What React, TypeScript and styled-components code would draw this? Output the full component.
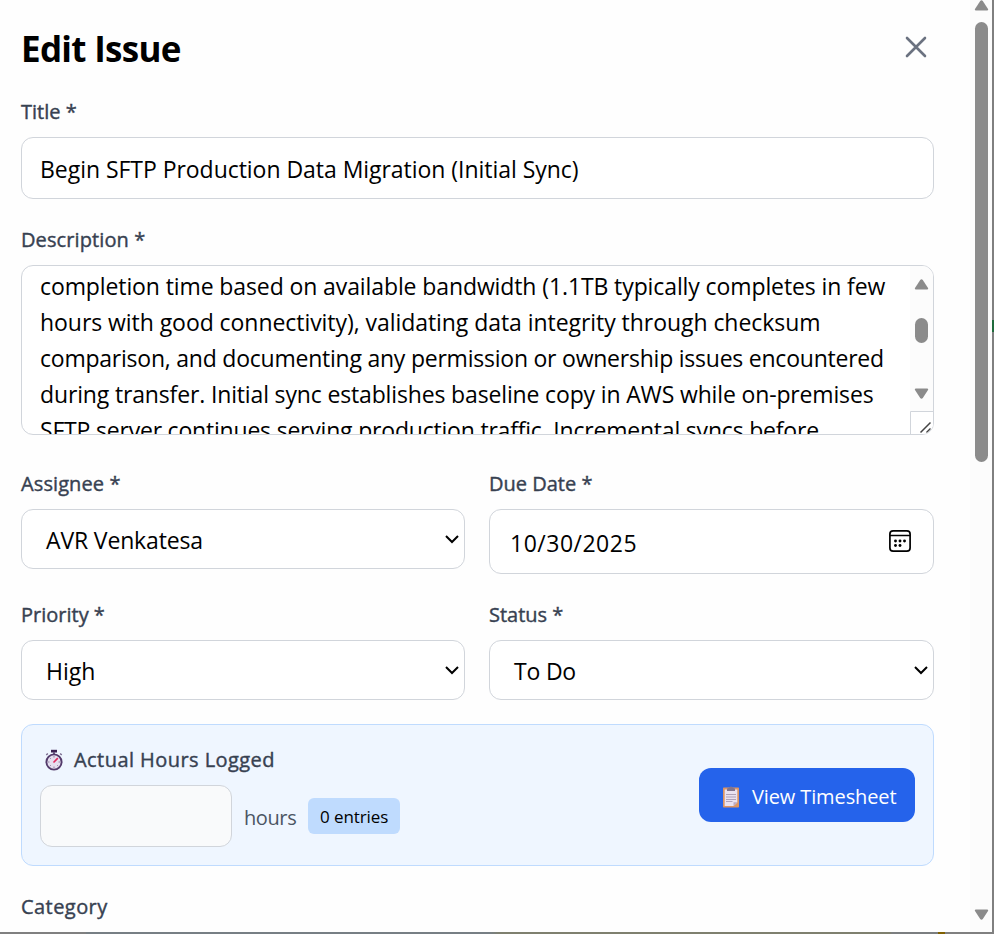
import React from "react";
import styled, { createGlobalStyle } from "styled-components";

const Global = createGlobalStyle`
  *{box-sizing:border-box}
  body{margin:0;background:#fff;overflow:hidden;font-family:"Open Sans","Noto Sans",sans-serif}
`;

const Frame = styled.div`
  width:994px;height:934px;display:flex;padding:0 2px 2px 0;overflow:hidden;
  background:
    linear-gradient(#1f6b3c,#1f6b3c) 992px 320px / 2px 12px no-repeat,
    linear-gradient(90deg,#808080 86px,#777f84 86px,#777f84 490px,#7f806f 500px,#7f806f 890px,#7b7e80 892px,#7b7e80 938px,#806000 938px,#806000 945px,#808080 945px) 0 932px / 992px 2px no-repeat,
    #808080;
`;
const Modal = styled.main`
  width:970px;height:932px;background:#fefefe;padding:24px 36px 0 21px;overflow:hidden;
`;
const PageScroll = styled.div`
  width:22px;height:932px;background:#fcfcfc;display:flex;flex-direction:column;align-items:center;
  padding:0 0 12px 1px;
`;
const Arrow = styled.svg`width:15px;height:11px;display:block;flex:none;`;
const Thumb = styled.div<{ $h: number; $top: number }>`
  width:13px;height:${p => p.$h}px;margin-top:${p => p.$top}px;background:#8b8b8b;border-radius:7px;flex:none;
`;
const Grow = styled.div`flex:1;`;
const Text = styled.span<{ $ls?: number }>`
  white-space:pre;letter-spacing:${p => p.$ls ?? 0}px;
`;
const Header = styled.header`
  display:flex;justify-content:space-between;height:76px;padding-right:4px;
`;
const Heading = styled.h1`margin:0;font-size:35px;font-weight:700;line-height:50px;color:#000;`;
const Close = styled.svg`width:28px;height:28px;margin-top:9px;`;
const Label = styled.div`
  height:37px;font-size:20px;line-height:24px;font-weight:500;color:#374151;white-space:nowrap;
  -webkit-text-stroke:0.4px #374151;
`;
const Box = styled.div<{ $h: number; $pl: number; $mb: number; $pr?: number }>`
  height:${p => p.$h}px;border:1px solid #d1d5db;border-radius:12px;background:#fff;
  padding:2px ${p => p.$pr ?? p.$pl}px 0 ${p => p.$pl}px;margin-bottom:${p => p.$mb}px;
  display:flex;align-items:center;justify-content:space-between;font-size:23px;color:#000;
`;
const Area = styled.div`
  height:170px;border:1px solid #d1d5db;border-radius:12px;margin-bottom:37px;overflow:hidden;display:flex;background:#fff;
`;
const AreaText = styled.div`
  flex:1;padding-left:18px;margin-top:2px;font-size:23px;line-height:36px;color:#000;
  display:flex;flex-direction:column;
`;
const AreaSide = styled.div`width:23px;display:flex;flex-direction:column;align-items:center;background:#fcfcfc;padding-top:13px;`;
const Corner = styled.svg`width:23px;height:23px;display:block;margin-top:12px;flex:none;`;
const Grid = styled.div`display:grid;grid-template-columns:444px 445px;column-gap:24px;`;
const Field = styled.div<{ $h: number }>`height:${p => p.$h}px;`;
const Chevron = styled.svg`width:16px;height:12px;margin-top:-3px;flex:none;`;
const CalIcon = styled.svg`width:24px;height:24px;margin-top:-4px;flex:none;`;
const Hours = styled.section`
  height:142px;border:1px solid #bfdbfe;border-radius:12px;background:#eff6ff;
  display:flex;justify-content:space-between;align-items:center;padding:0 18px;margin-bottom:29px;
`;
const HoursLeft = styled.div`height:100%;padding-top:22px;`;
const HoursTitle = styled.div`
  display:flex;align-items:center;height:26px;font-size:20px;line-height:26px;font-weight:500;color:#374151;
  -webkit-text-stroke:0.4px #374151;
  margin-bottom:12px;padding-left:4px;gap:10px;
`;
const Emoji = styled.svg`width:20px;height:22px;flex:none;-webkit-text-stroke:0;`;
const HoursRow = styled.div`display:flex;align-items:center;`;
const HoursInput = styled.div`width:192px;height:62px;border:1px solid #d1d5db;border-radius:12px;background:#f9fafb;`;
const Unit = styled.div`width:64px;margin:3px 0 0 12px;font-size:20px;color:#4b5563;`;
const Badge = styled.div`
  width:92px;height:36px;border-radius:6px;background:#bfdbfe;font-size:17px;line-height:37px;padding-left:12px;color:#000;
`;
const Button = styled.button`
  width:216px;height:54px;border:0;border-radius:12px;background:#2563eb;color:#fff;font:400 20px/54px "Open Sans",sans-serif;
  display:flex;align-items:center;padding:3px 0 0 22px;gap:11px;
`;

const ArrowUp = () => <Arrow viewBox="0 0 15 11"><path d="M6.200 1 1 9q-.7 1.500 1 1.500h11q1.700 0 1-1.500L8.800 1Q7.500 -.5 6.200 1z" fill="#8b8b8b" /></Arrow>;
const ArrowDown = () => <Arrow viewBox="0 0 15 11"><path d="M6.200 10 1 2Q.3.500 2 .5h11q1.700 0 1 1.500L8.800 10q-1.300 1.500-2.600 0z" fill="#8b8b8b" /></Arrow>;
const Down = () => <Chevron viewBox="0 0 16 12"><path d="m2 3 6 6 6-6" fill="none" stroke="#000" strokeWidth="2" /></Chevron>;

const Calendar = () => (
  <CalIcon viewBox="0 0 24 24">
    <rect x="1.9" y="1.900" width="20.200" height="20.200" rx="3.200" fill="none" stroke="#000" strokeWidth="1.700" />
    <path d="M2 6.500h20" stroke="#000" strokeWidth="1.500" />
    <g fill="#000">
      <circle cx="7.500" cy="12" r="1.450" /><circle cx="12" cy="12" r="1.450" /><circle cx="16.500" cy="12" r="1.450" />
      <circle cx="7.500" cy="16.500" r="1.450" /><circle cx="12" cy="16.500" r="1.450" />
    </g>
  </CalIcon>
);

const Stopwatch = () => (
  <Emoji viewBox="0 0 20 22">
    <path d="M7 .8h6v2.700H7z" fill="#3b2353" />
    <path d="M9 3h2v3H9z" fill="#6b5b83" />
    <path d="m2.300 6 1.500-1.500M17.700 6l-1.500-1.500" stroke="#7b6c90" strokeWidth="1.500" />
    <circle cx="10" cy="13" r="7.600" fill="#e6dff0" stroke="#533b6b" strokeWidth="1.900" />
    <path d="M10 7v1.500M10 17.500V19M4 13h1.500M14.500 13H16M5.800 8.800l1 1M5.800 17.200l1-1M14.200 17.200l-1-1" stroke="#8f83a2" strokeWidth="1" />
    <path d="m9.500 13.500 4.300-4.300" stroke="#e22b5f" strokeWidth="1.700" />
  </Emoji>
);

const Clipboard = () => (
  <Emoji viewBox="0 0 20 22">
    <rect x="2" y="1.500" width="16" height="20" rx=".7" fill="#dc9564" />
    <path d="M3.700 3.500h12.600v13L12.500 20H3.700z" fill="#eae2f0" />
    <path d="M12.500 20v-3.700h3.800z" fill="#b9a9c4" />
    <path d="M6 5V3q0-1 2-1 .4-1.500 2-1.500T12 2q2 0 2 1v2z" fill="#82758d" />
    <path d="M5 8.500h10M5 11h10M5 13.500h10M5 15.500h6.500" stroke="#afa2b9" strokeWidth="1" />
  </Emoji>
);

const lines: [string, number][] = [
  ["completion time based on available bandwidth (1.1TB typically completes in few", -0.105],
  ["hours with good connectivity), validating data integrity through checksum", -0.055],
  ["comparison, and documenting any permission or ownership issues encountered", -0.23],
  ["during transfer. Initial sync establishes baseline copy in AWS while on-premises", -0.15],
  ["SFTP server continues serving production traffic. Incremental syncs before", -0.2],
];

export default function App() {
  return (
    <>
      <Global />
      <Frame>
        <Modal>
          <Header>
            <Heading><Text $ls={-0.7}>Edit Issue</Text></Heading>
            <Close viewBox="0 0 28 28"><path d="m5 5 18 18M23 5 5 23" stroke="#6b7280" strokeWidth="2.600" strokeLinecap="round" /></Close>
          </Header>
          <Label><Text>Title *</Text></Label>
          <Box $h={62} $pl={18} $mb={29}><Text $ls={-0.04}>Begin SFTP Production Data Migration (Initial Sync)</Text></Box>
          <Label><Text $ls={0.1}>Description *</Text></Label>
          <Area>
            <AreaText>{lines.map(([t, ls]) => <Text key={t} $ls={ls}>{t}</Text>)}</AreaText>
            <AreaSide>
              <ArrowUp /><Thumb $h={25} $top={28} /><Grow /><ArrowDown />
              <Corner viewBox="0 0 23 23"><path d="M0 0h23v23H0z" fill="#fff" /><path d="M.5 23V.5H23" fill="none" stroke="#d1d5db" /><path d="M10.500 21.500 20.500 11.500M16.500 21.500l4-4" stroke="#444" strokeWidth="1.500" /></Corner>
            </AreaSide>
          </Area>
          <Grid>
            <Field $h={131}><Label><Text $ls={0.1}>Assignee *</Text></Label><Box $h={60} $pl={24} $pr={4} $mb={0}><Text $ls={-0.15}>AVR Venkatesa</Text><Down /></Box></Field>
            <Field $h={131}><Label><Text>Due Date *</Text></Label><Box $h={65} $pl={20} $pr={21} $mb={0}><Text $ls={0.5}>10/30/2025</Text><Calendar /></Box></Field>
            <Field $h={121}><Label><Text>Priority *</Text></Label><Box $h={60} $pl={24} $pr={4} $mb={0}><Text>High</Text><Down /></Box></Field>
            <Field $h={121}><Label><Text>Status *</Text></Label><Box $h={60} $pl={24} $pr={4} $mb={0}><Text $ls={-0.2}>To Do</Text><Down /></Box></Field>
          </Grid>
          <Hours>
            <HoursLeft>
              <HoursTitle><Stopwatch /><Text $ls={0.44}>Actual Hours Logged</Text></HoursTitle>
              <HoursRow><HoursInput /><Unit><Text $ls={-0.4}>hours</Text></Unit><Badge><Text $ls={-0.1}>0 entries</Text></Badge></HoursRow>
            </HoursLeft>
            <Button><Clipboard /><Text $ls={-0.12}>View Timesheet</Text></Button>
          </Hours>
          <Label><Text $ls={0.44}>Category</Text></Label>
        </Modal>
        <PageScroll><ArrowUp /><Thumb $h={440} $top={11} /><Grow /><ArrowDown /></PageScroll>
      </Frame>
    </>
  );
}
